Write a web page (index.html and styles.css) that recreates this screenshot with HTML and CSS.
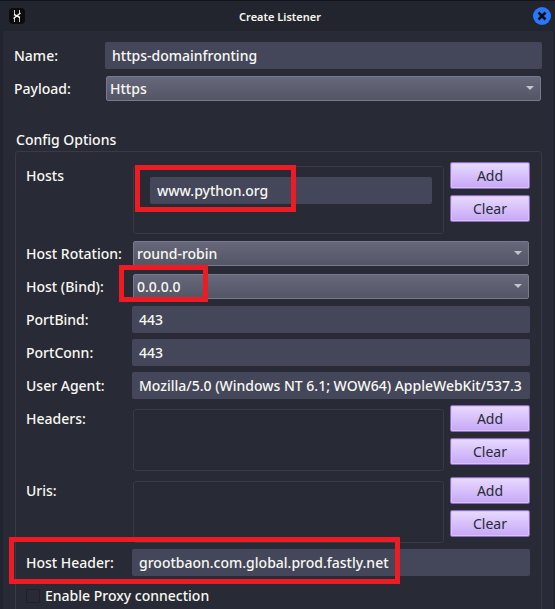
FILE: index.html
```html
<!DOCTYPE html>
<html lang="en">
<head>
<meta charset="utf-8">
<title>Create Listener</title>
<link rel="stylesheet" href="styles.css">
</head>
<body>
<div class="window">
  <header class="titlebar">
    <svg class="app-icon" viewBox="0 0 16 16" aria-hidden="true">
      <rect width="16" height="16" rx="4" fill="#0c0c0d"/>
      <path d="M5.500 2v5M5.500 10v4M10.500 2v4M10.500 9v5" fill="none" stroke="#c8c8c8" stroke-width="1"/>
      <path d="M4.500 10.500L11.500 5M5 6.500l6 3" fill="none" stroke="#f0f0f0" stroke-width="1.500"/>
    </svg>
    <h1 class="title">Create Listener</h1>
    <button class="close" type="button" aria-label="Close">
      <svg viewBox="0 0 18 18" aria-hidden="true">
        <circle cx="9" cy="9" r="9" fill="#2777ff"/>
        <path d="M5.500 5.500l7 7M12.500 5.500l-7 7" stroke="#0b0d14" stroke-width="2.600"/>
      </svg>
    </button>
  </header>
  <form class="content">
    <div class="row row-top">
      <label for="name">Name:</label>
      <input class="field" id="name" type="text" value="https-domainfronting">
    </div>
    <div class="row row-top">
      <label for="payload">Payload:</label>
      <div class="combo"><select id="payload"><option>Https</option></select></div>
    </div>
    <h2 class="group-title">Config Options</h2>
    <section class="group">
      <div class="row row-hosts">
        <label for="host">Hosts</label>
        <div class="list list-hosts">
          <input class="field" id="host" type="text" value="www.python.org">
        </div>
        <div class="actions">
          <button class="btn" type="button">Add</button>
          <button class="btn" type="button">Clear</button>
        </div>
        <span class="mark mark-host"></span>
      </div>
      <div class="row">
        <label for="rotation">Host Rotation:</label>
        <div class="combo"><select id="rotation"><option>round-robin</option></select></div>
      </div>
      <div class="row">
        <label for="bind">Host (Bind):</label>
        <div class="combo"><select id="bind"><option>0.0.0.0</option></select></div>
        <span class="mark mark-bind"></span>
      </div>
      <div class="row">
        <label for="portbind">PortBind:</label>
        <input class="field" id="portbind" type="text" value="443">
      </div>
      <div class="row">
        <label for="portconn">PortConn:</label>
        <input class="field" id="portconn" type="text" value="443">
      </div>
      <div class="row">
        <label for="agent">User Agent:</label>
        <input class="field" id="agent" type="text" value="Mozilla/5.0 (Windows NT 6.1; WOW64) AppleWebKit/537.3">
      </div>
      <div class="row row-list">
        <span class="label">Headers:</span>
        <div class="list"></div>
        <div class="actions">
          <button class="btn" type="button">Add</button>
          <button class="btn" type="button">Clear</button>
        </div>
      </div>
      <div class="row row-list">
        <span class="label">Uris:</span>
        <div class="list"></div>
        <div class="actions">
          <button class="btn" type="button">Add</button>
          <button class="btn" type="button">Clear</button>
        </div>
      </div>
      <div class="row">
        <label for="hostheader">Host Header:</label>
        <input class="field" id="hostheader" type="text" value="grootbaon.com.global.prod.fastly.net">
        <span class="mark mark-header"></span>
      </div>
      <div class="check">
        <input id="proxy" type="checkbox">
        <label for="proxy">Enable Proxy connection</label>
      </div>
    </section>
  </form>
</div>
</body>
</html>
```

FILE: styles.css
```css
* {
  box-sizing: border-box;
}

body {
  margin: 0;
  background: #23252e;
  color: #f8f8f2;
  font: 500 14px/27px "Noto Sans", sans-serif;
}

input,
select,
button {
  margin: 0;
  color: inherit;
  font: inherit;
}

.window {
  display: flex;
  flex-direction: column;
  height: 100vh;
  overflow: hidden;
  border-top: 1px solid #14151a;
}

.titlebar {
  display: grid;
  grid-template-columns: 18px 1fr 18px;
  align-items: center;
  flex: none;
  height: 30px;
  padding: 0 4px 0 9px;
}

.app-icon {
  display: block;
  width: 16px;
  height: 16px;
}

.title {
  margin: 0;
  font-size: 11px;
  font-weight: 600;
  text-align: center;
}

.close {
  width: 18px;
  height: 18px;
  padding: 0;
  border: 0;
  background: none;
}

.close svg {
  display: block;
}

.content {
  display: flex;
  flex: 1;
  flex-direction: column;
  gap: 6px;
  margin: 0 2px 0 3px;
  padding: 11px 11px 0;
  background: #282a36;
}

.row {
  display: grid;
  grid-template-columns: 106px minmax(0, 1fr);
  position: relative;
}

.row-top {
  grid-template-columns: 91px minmax(0, 1fr);
}

.row-hosts,
.row-list {
  grid-template-columns: 106px minmax(0, 1fr) 80px;
}

.row-hosts {
  height: 72px;
}

.row-list {
  height: 66px;
}

.row label,
.label {
  white-space: nowrap;
}

.field {
  width: 100%;
  height: 27px;
  padding: 0 3px 0 7px;
  border: 0;
  border-radius: 2px;
  background: #44475a;
}

.combo {
  position: relative;
  height: 27px;
  padding: 1px;
}

.combo::after {
  content: "";
  position: absolute;
  top: 11px;
  right: 8px;
  border: 4px solid transparent;
  border-top-color: #c5c5c9;
  border-bottom: 0;
  pointer-events: none;
}

select {
  display: block;
  width: 100%;
  height: 25px;
  padding: 0 20px 0 3px;
  appearance: none;
  border: 1px solid #77798c;
  border-radius: 2px;
  background: linear-gradient(#66687b, #545666);
  line-height: 23px;
}

.group-title {
  margin: 21px 0 0 2px;
  font-size: 14px;
  font-weight: 500;
  line-height: 22px;
}

.group {
  display: flex;
  flex: 1;
  flex-direction: column;
  gap: 6px;
  margin: -6px 0 0 1px;
  padding: 10px 11px 0 10px;
  border: 1px solid #373a47;
  border-bottom: 0;
  border-radius: 3px 3px 0 0;
}

.list {
  margin: 4px 6px 0 1px;
  border: 1px solid #373a47;
  border-radius: 3px;
}

.list-hosts {
  padding: 10px 11px 10px 16px;
}

.list-hosts .field {
  display: block;
}

.actions {
  display: flex;
  flex-direction: column;
  gap: 6px;
}

.btn {
  height: 27px;
  padding: 0;
  border: 1px solid #8d6bbd;
  border-radius: 2px;
  background: linear-gradient(#e8daff, #c6a7f6);
  box-shadow: inset 0 0 0 1px #d8c2fa;
  color: #282a36;
  font-weight: 400;
  line-height: 25px;
}

.check {
  display: flex;
  align-items: center;
  gap: 5px;
  height: 27px;
}

.check input {
  width: 14px;
  height: 14px;
  appearance: none;
  border: 1px solid #1f2029;
  border-radius: 1px;
}

.mark {
  position: absolute;
  border: 5px solid #ed1c24;
  pointer-events: none;
}

.mark-host {
  top: 3px;
  left: 109px;
  width: 161px;
  height: 47px;
}

.mark-bind {
  z-index: 1;
  top: -8px;
  left: 93px;
  width: 89px;
  height: 37px;
}

.mark-header {
  top: -12px;
  left: -17px;
  width: 391px;
  height: 47px;
}
```
